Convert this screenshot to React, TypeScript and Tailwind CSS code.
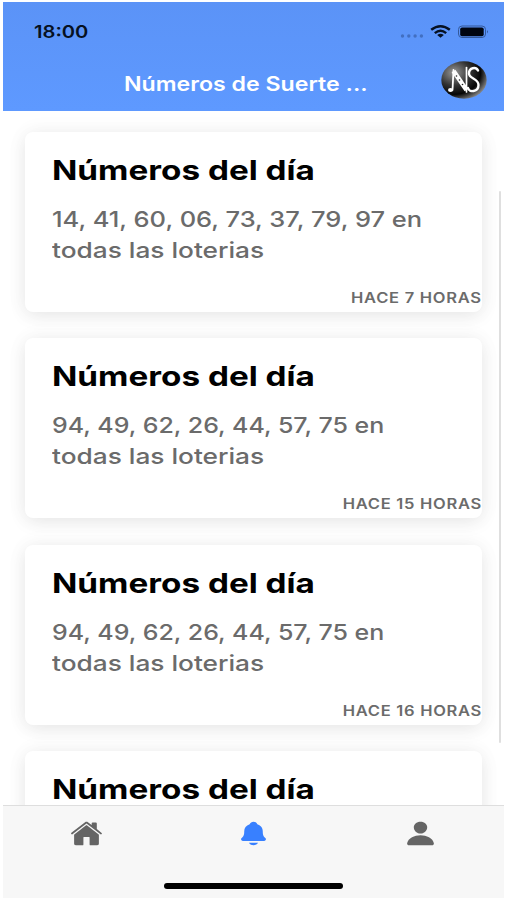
import React from "react";
import { IoHome, IoNotifications, IoPerson } from "react-icons/io5";

type Notice = { id: number; numbers?: string; time?: string; fit?: string };

const notices: Notice[] = [
  { id: 1, numbers: "14, 41, 60, 06, 73, 37, 79, 97 en", time: "HACE 7 HORAS", fit: "scale-x-[1.158]" },
  { id: 2, numbers: "94, 49, 62, 26, 44, 57, 75 en", time: "HACE 15 HORAS", fit: "scale-x-[1.135]" },
  { id: 3, numbers: "94, 49, 62, 26, 44, 57, 75 en", time: "HACE 16 HORAS", fit: "scale-x-[1.135]" },
  { id: 4 },
];

function Card({ notice }: { notice: Notice }) {
  return (
    <article className="flex h-[180px] shrink-0 flex-col rounded-[8px] bg-white pl-[27.5px] shadow-[0_4px_18px_rgba(0,0,0,0.08),0_0_24px_rgba(0,0,0,0.04)]">
      <h2 className="mt-[20px] h-9 w-fit origin-left scale-x-[1.21] whitespace-nowrap text-[27.5px] leading-9 font-bold text-black">
        Números del día
      </h2>
      {notice.numbers && (
        <>
          <p className={"mt-[16px] h-[31px] w-fit origin-left whitespace-nowrap text-[22px] leading-[31px] font-medium text-[#6b6b6b] " + notice.fit}>
            {notice.numbers}
          </p>
          <p className="h-[31px] w-fit origin-left scale-x-[1.193] whitespace-nowrap text-[22px] leading-[31px] font-medium text-[#6b6b6b]">
            todas las loterias
          </p>
          <p className="mt-[22px] h-5 w-fit origin-right scale-x-[1.18] self-end whitespace-nowrap text-[14px] leading-5 font-semibold tracking-[0.6px] text-[#6b6b6b]">
            {notice.time}
          </p>
        </>
      )}
    </article>
  );
}

function Logo() {
  return (
    <svg width="46" height="38" viewBox="0 0 46 38" className="shrink-0">
      <defs>
        <radialGradient id="sphere" cx="0.28" cy="0.3" r="0.78">
          <stop offset="0" stopColor="#999" />
          <stop offset="0.45" stopColor="#333" />
          <stop offset="0.75" stopColor="#060606" />
          <stop offset="1" stopColor="#808080" />
        </radialGradient>
      </defs>
      <ellipse cx="23" cy="19" rx="22.7" ry="18.7" fill="url(#sphere)" />
      <g fill="none" stroke="#fff" strokeLinecap="round">
        <path d="M11.5 29 L12.5 9" strokeWidth="1.8" />
        <path d="M12.5 10 L25.5 29" strokeWidth="4.6" strokeLinecap="butt" />
        <path d="M25.5 31 V6.5" strokeWidth="1.7" />
        <path d="M37 9.5 C35 5.5 28 6.5 28 12.5 C28 18 37.5 17 37.5 24 C37.5 31 28 32 27 27" strokeWidth="2.4" />
      </g>
      <ellipse cx="9.5" cy="29" rx="2.5" ry="2" fill="#fff" />
      <g fill="#222">
        <circle cx="15.5" cy="15" r="0.8" />
        <circle cx="18.5" cy="19" r="0.8" />
        <circle cx="21.5" cy="23.5" r="0.8" />
      </g>
    </svg>
  );
}

function StatusIcons() {
  return (
    <svg width="90" height="16" viewBox="0 0 90 16">
      <g fill="#426fc1">
        <circle cx="3.5" cy="12" r="1.7" />
        <circle cx="9.8" cy="12" r="1.7" />
        <circle cx="16.1" cy="12" r="1.7" />
        <circle cx="22.4" cy="12" r="1.7" />
      </g>
      <g fill="none" stroke="#061122" strokeWidth="2.5">
        <path d="M32.2 5.8 Q41.5 -1.4 50.8 5.8" />
        <path d="M35.8 9.1 Q41.5 4.5 47.2 9.1" />
      </g>
      <path d="M38.2 10.9 Q41.5 8.6 44.8 10.9 L41.5 13.8 Z" fill="#061122" />
      <rect x="59.5" y="2" width="27" height="11.5" rx="3.5" fill="none" stroke="#34599a" />
      <rect x="61.2" y="3.4" width="23.5" height="8.8" rx="1.8" fill="#000510" />
      <path d="M88 6 Q89.8 7.8 88 9.6 Z" fill="#284984" />
    </svg>
  );
}

export default function App() {
  return (
    <div className="h-[900px] w-[507px] overflow-hidden bg-white pt-[2px] pl-[3px] font-['Inter',sans-serif]">
      <div className="relative flex h-[896px] w-[501px] flex-col overflow-hidden bg-white">
        <header className="z-10 flex h-[108.5px] shrink-0 flex-col bg-linear-to-b from-[#5b93f7] to-[#5e99ff]">
          <div className="flex h-[57px] items-center justify-between pt-[3px] pr-[15px] pl-[31px]">
            <span className="origin-left scale-x-[1.15] text-[17.5px] font-semibold text-[#061122]">18:00</span>
            <StatusIcons />
          </div>
          <div className="flex h-[42px] items-center pr-[17px] pl-[121px]">
            <h1 className="mt-[9px] flex-1 origin-left scale-x-[1.187] whitespace-nowrap text-[19.5px] font-semibold text-white">
              Números de Suerte ...
            </h1>
            <Logo />
          </div>
        </header>

        <main className="flex min-h-0 flex-1 flex-col gap-[26.5px] overflow-hidden pt-[21px] pr-[22px] pl-[21.5px]">
          {notices.map((notice) => (
            <Card key={notice.id} notice={notice} />
          ))}
        </main>

        <div className="absolute top-[189px] right-[3px] h-[552px] w-[2px] rounded-full bg-[#dfdfdf]" />

        <footer className="z-10 flex h-[93px] shrink-0 flex-col border-t border-[#dedede] bg-[#f7f7f7]">
          <nav className="grid h-[54px] grid-cols-3 place-items-center text-[#656565]">
            <IoHome className="h-[27px] w-[33px]" preserveAspectRatio="none" />
            <IoNotifications className="h-[27px] w-[33px] text-[#3880ff]" preserveAspectRatio="none" />
            <IoPerson className="h-[27px] w-[33px]" preserveAspectRatio="none" />
          </nav>
          <div className="mt-[23px] h-[6px] w-[179px] self-center rounded-full bg-black" />
        </footer>
      </div>
    </div>
  );
}
